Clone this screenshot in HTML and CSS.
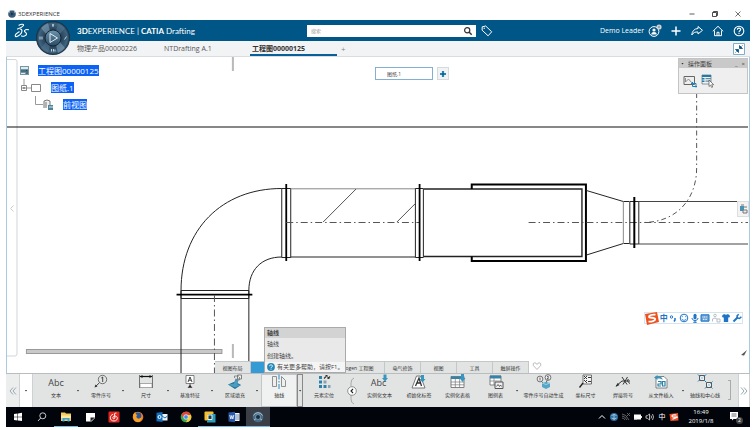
FILE: index.html
```html
<!DOCTYPE html>
<html lang="zh-CN">
<head>
  <meta charset="UTF-8">
  <title>3DEXPERIENCE</title>
  <link rel="stylesheet" href="styles.css">
</head>
<body>
  <div class="screen">
    <div class="titlebar">
      <svg class="app-icon" viewBox="0 0 8 8"><circle cx="4" cy="4" r="3.8" fill="#375a78"/><path d="M1 3a3 3 0 0 1 6 0" fill="none" stroke="#9fb9cc"/><path d="M3 2.500l3 1.500-3 1.500z" fill="#16324a"/></svg>
      <span class="title">3DEXPERIENCE</span>
      <div class="win-buttons">
        <button aria-label="最小化"><svg viewBox="0 0 8 8"><path d="M1.500 4h5" stroke="#333" stroke-width=".8"/></svg></button>
        <button aria-label="还原"><svg viewBox="0 0 8 8"><path d="M1.500 2.500h4v4h-4zM2.500 2.500v-1h4v4h-1" fill="none" stroke="#222" stroke-width=".8"/></svg></button>
        <button aria-label="关闭"><svg viewBox="0 0 8 8"><path d="M1.500 1.500l5 5M6.500 1.500l-5 5" stroke="#333" stroke-width=".7"/></svg></button>
      </div>
    </div>

    <header class="topbar">
      <svg class="ds-logo" viewBox="0 0 16 16" fill="none" stroke="#fff" stroke-width="1.100" stroke-linecap="round"><path d="M5 2.200C7.500.6 10.500 1 9.300 2.700 8.300 4.200 5.500 5.300 3.500 6"/><path d="M6.300 6c2.700.5 1.700 3.800-.3 5.700C4 13.500 1.500 14.300 1.200 13c0-1.300 2.200-3.200 4-4.200"/><path d="M14.500 6.800c-1.800-.8-4.500 0-4 1.500.4 1.100 2.300 1.300 2 2.800-.4 1.900-3.300 2.600-5 1.800"/></svg>
      <div class="brand"><b>3D</b>EXPERIENCE | <b>CATIA</b> Drafting</div>
      <form class="search">
        <input type="text" placeholder="搜索" aria-label="搜索">
        <button type="button" aria-label="搜索"><svg viewBox="0 0 10 10"><circle cx="4.200" cy="4.200" r="2.600" fill="none" stroke="#333" stroke-width="1.200"/><path d="M6 6l2.700 2.700" stroke="#333" stroke-width="1.500"/></svg></button>
      </form>
      <button class="tag" aria-label="标记"><svg viewBox="0 0 12 12"><path d="M1.200 1.800l3.500-.8 6 5.800-3.600 4-6-5.600z" fill="none" stroke="#fff"/><circle cx="3.200" cy="3.200" r=".7" fill="#fff"/></svg></button>
      <div class="account">
        <span class="user">Demo Leader</span>
        <button aria-label="用户"><svg viewBox="0 0 14 14"><circle cx="6" cy="7.500" r="4.900" fill="none" stroke="#fff"/><circle cx="6" cy="6" r="1.600" fill="#fff"/><path d="M3.200 10.500c0-3.300 5.600-3.300 5.600 0z" fill="#fff"/><circle cx="11" cy="3" r="2.600" fill="#cdd3d8"/><circle cx="11" cy="3" r="1" fill="#8797a3"/></svg></button>
        <button aria-label="添加"><svg viewBox="0 0 14 14"><path d="M7 2.500v9M2.500 7h9" stroke="#fff" stroke-width="1.500"/></svg></button>
        <button aria-label="共享"><svg viewBox="0 0 14 14"><path d="M8 2.500l4.500 3.800L8 10V8C5 7.800 3.300 8.500 1.800 11 2 7.500 4 4.700 8 4.500z" fill="none" stroke="#fff" stroke-linejoin="round"/></svg></button>
        <button aria-label="主页"><svg viewBox="0 0 14 14"><path d="M1.800 7.300L7 2.300l5.200 5M3.500 6.500v5.200h7V6.500M6 11.500V8.300h2v3.200" fill="none" stroke="#fff"/></svg></button>
        <button aria-label="帮助"><svg viewBox="0 0 14 14"><circle cx="7" cy="7" r="4.800" fill="none" stroke="#fff" stroke-width="1.100"/><path d="M5.300 5.800c0-2.200 3.400-2.200 3.400-.2C8.700 6.800 7 6.800 7 8.200M7 9v1.100" fill="none" stroke="#fff" stroke-width="1.100"/></svg></button>
      </div>
      <button class="compass" aria-label="罗盘">
        <svg viewBox="0 0 36 36">
          <defs>
            <radialGradient id="ring"><stop offset=".5" stop-color="#29435a"/><stop offset=".85" stop-color="#3e6480"/><stop offset="1" stop-color="#16293a"/></radialGradient>
            <linearGradient id="core" x2="0" y2="1"><stop offset="0" stop-color="#6f94ae"/><stop offset="1" stop-color="#294b66"/></linearGradient>
          </defs>
          <circle cx="18" cy="18" r="17" fill="url(#ring)"/>
          <path d="M6 8a16 16 0 0 1 7-5l2 8-4 3zM30 28a16 16 0 0 1-7 5l-2-8 4-3z" fill="#88a8bd" opacity=".55"/>
          <path d="M30 8a16 16 0 0 0-7-5l-2 8 4 3zM6 28a16 16 0 0 0 7 5l2-8-4-3z" fill="#557a94" opacity=".5"/>
          <circle cx="18" cy="18" r="8" fill="url(#core)" stroke="#132737"/>
          <path d="M15 13.500l7.500 4.500-7.500 4.500z" fill="none" stroke="#e3edf3"/>
          <path d="M18 4v3M17 5h2M5 16.500v3M7 16.500v3M29.500 19.500l2-3M16.500 29v2.500M18.500 29v2.500M20 29.500v2" stroke="#d6e2ea" stroke-width=".9"/>
        </svg>
      </button>
    </header>

    <nav class="doc-tabs">
      <a class="doc-tab" href="#">物理产品00000226</a>
      <a class="doc-tab" href="#">NTDrafting A.1</a>
      <a class="doc-tab active" href="#">工程图00000125</a>
      <button class="add-tab" aria-label="新建选项卡">+</button>
      <button class="shrink" aria-label="缩小"><svg viewBox="0 0 12 12"><path d="M.5.5h11v11H.5z" fill="#fff" stroke="#7fb0ca"/><path d="M2.500 9.500l1-1M2.500 6.500h3v3zM9.500 2.500l-1 1M6.500 2.500v3h3z" fill="#0b517d" stroke="#0b517d" stroke-width=".8"/></svg></button>
    </nav>

    <main class="canvas">
      <svg class="drawing" viewBox="6 57 744 316" preserveAspectRatio="none" fill="none" stroke="#222" stroke-width="1">
        <!-- side rail and scroll bars -->
        <path d="M6 59.500h8q2 0 2 2V354q0 2-2 2H6" stroke="#cfd6da"/>
        <path d="M12.500 205.500l-3 3 3 3" stroke="#c5cdd2"/>
        <rect x="25.500" y="349.500" width="196" height="4" fill="#c9c9c9" stroke="#999"/>
        <path d="M232.500 57v14M232.500 344v14" stroke="#b9b9b9" stroke-width="2"/>
        <path d="M6 127h743" stroke="#111" stroke-width="1.200"/>
        <!-- elbow -->
        <path d="M180.500 373v-82.500C180.500 230 221 188.500 281.500 188.500M248.500 373v-82.500C248.500 270 261 257 281.500 257"/>
        <path d="M180.500 290.500h68v8h-68z"/>
        <path d="M176 294.700h76" stroke="#000" stroke-width="1.800"/>
        <path d="M214 295v78" stroke="#555" stroke-dasharray="7 3 1.500 3"/>
        <path d="M281.500 188.500h9v69h-9z"/>
        <path d="M286 184v77" stroke="#000" stroke-width="1.800"/>
        <!-- straight pipe -->
        <path d="M290.500 188.800h125" stroke="#888"/>
        <path d="M290.500 257h125"/>
        <path d="M323 222l33-33M397 222l18-18" stroke="#555"/>
        <path d="M286 222.500h134" stroke="#555" stroke-dasharray="7 3 1.500 3"/>
        <path d="M415.500 188.500h8v69h-8z"/>
        <path d="M419.700 184v77" stroke="#000" stroke-width="1.800"/>
        <!-- sleeve -->
        <path d="M424 189h158.500v67.500H424" stroke-width="1.400"/>
        <path d="M472 189v-4.500h114.500v76.500H472v-4.500" stroke="#000" stroke-width="2"/>
        <path d="M529 222.500h220" stroke="#555" stroke-dasharray="7 3 1.500 3"/>
        <!-- reducer and branch -->
        <path d="M587 190.500l37 11h6M587 255l37-11.500h6M630.500 201.500h9v42.500h-9z"/>
        <path d="M624 201.500v42.500" stroke="#888"/>
        <path d="M635 197v51" stroke="#000" stroke-width="2"/>
        <path d="M639.500 201.500h109.500M639.500 244h109.500" stroke="#444"/>
        <path d="M697.500 93v75c0 31-20 54.500-54 54.500" stroke="#555" stroke-dasharray="5 3 1.500 3"/>
        <path d="M748 350l-6 5 3 0.500-1.500 3z" fill="#555" stroke="none"/>
      </svg>

      <ul class="tree">
        <li>
          <svg viewBox="0 0 9 9"><path d="M0 0h9v9H0z" fill="#7895a4"/><path d="M1 1h7v2H1zM1 7h4v1H1z" fill="#dcebf1"/><path d="M1 5h5l1-1v4" stroke="#19485f" fill="none"/></svg>
          <span>工程图00000125</span>
        </li>
        <li class="sheet">
          <svg viewBox="0 0 22 17"><path d="M4 0v6M6 9h5" stroke="#999"/><path d="M1.500 6.500h5v5h-5zM11.500 5.500h9v7h-9z" fill="#fff" stroke="#888"/><path d="M2.500 9h3" stroke="#222"/></svg>
          <span>图纸.1</span>
        </li>
        <li class="view">
          <svg viewBox="0 0 20 17"><path d="M1.500 0v8.500H9" fill="none" stroke="#999"/><path d="M10 12V5l3-1 3 1v4" fill="#eee" stroke="#777"/><path d="M12 6v6" stroke="#777"/><path d="M14 9h5v5h-5z" fill="#4e8296"/><path d="M15 11h4" stroke="#d7e8ee"/></svg>
          <span>前视图</span>
        </li>
      </ul>

      <div class="sheet-picker">
        <input type="text" value="图纸.1" aria-label="图纸">
        <button aria-label="新建图纸"><svg viewBox="0 0 10 10"><path d="M5 2v6M2 5h6" stroke="#1f84b4" stroke-width="2.200"/><path d="M5 4v2M4 5h2" stroke="#0c5680"/></svg></button>
      </div>

      <section class="panel">
        <div class="panel-title">
          <span class="caret"></span>
          <span class="panel-name">操作面板</span>
          <button aria-label="最小化">_</button>
          <button aria-label="关闭">×</button>
        </div>
        <div class="panel-body">
          <button aria-label="视图裁剪"><svg viewBox="0 0 14 14"><path d="M1 2.500h10.500v8H1z" fill="#eee" stroke="#666"/><path d="M2.500 4v4l3-3 3 3.500H10" fill="none" stroke="#777" stroke-width=".8"/><path d="M8 9.500h5v4M9.500 8v4.500H14" fill="none" stroke="#1a82b5"/></svg></button>
          <button aria-label="选择列表"><svg viewBox="0 0 14 14"><path d="M1 1h9v9H1z" fill="#eef3f5" stroke="#56707f" stroke-width=".7"/><path d="M1 1h9v2H1zM1 4h2.500v1.500H1zM1 6.500h2.500V8H1z" fill="#207ba9"/><path d="M4.500 4.700H10M4.500 7.200H10" stroke="#6c8b9a" stroke-width="1.300"/><path d="M8 6v6.500l1.500-1.400 1.200 2.400 1-.5-1-2.300h2z" fill="#fff" stroke="#555" stroke-width=".7"/></svg></button>
        </div>
      </section>

      <button class="side-tool" aria-label="树"><svg viewBox="0 0 10 14"><path d="M2 4h4v5H2z" fill="#4a92b5"/><path d="M3 3h3M6 5h3M5 8h4v3H5z" fill="#eee" stroke="#777"/></svg></button>

      <div class="ime">
        <svg class="sogou" viewBox="0 0 14 13"><path d="M0 2L12 0l2 10-12 3z" fill="#f0501e"/><path d="M10.500 2.700C7 2.500 3.800 3 4 4.800c.2 1.500 6 .3 6.200 2.200.2 2-3.500 2.600-6.700 2.600" fill="none" stroke="#fff" stroke-width="1.800"/></svg>
        <button class="zh">中</button>
        <button aria-label="标点"><svg viewBox="0 0 10 10"><circle cx="3.500" cy="4" r="1.200" fill="none" stroke="#1f74c8"/><path d="M7 5v2l-1 1.500" fill="none" stroke="#1f74c8" stroke-width="1.500"/></svg></button>
        <button aria-label="表情"><svg viewBox="0 0 10 10"><circle cx="5" cy="5" r="3.800" fill="none" stroke="#1f74c8"/><path d="M3.300 3.200v1M6.700 3.200v1M2.800 5.800c1 2 3.400 2 4.400 0" fill="none" stroke="#1f74c8" stroke-width=".9"/></svg></button>
        <button aria-label="语音"><svg viewBox="0 0 10 10"><rect x="3.500" y=".8" width="3" height="5.500" rx="1.500" fill="#1f74c8"/><path d="M2 5c0 3.300 6 3.300 6 0M5 7v2.500M3.300 9.300h3.400" fill="none" stroke="#1f74c8"/></svg></button>
        <button aria-label="键盘"><svg viewBox="0 0 10 10"><path d="M1 1.800h8v6.400H1z" fill="#6ba3d9" stroke="#1f74c8"/><path d="M2.500 4h5M3 6.300h4" stroke="#fff" stroke-dasharray="1 .6"/></svg></button>
        <button aria-label="登录"><svg viewBox="0 0 10 10" fill="none" stroke="#b8bec5"><circle cx="4" cy="2.500" r="1.300"/><path d="M1.500 8.500V6L4 5l2 1v3M6 6h3v3H6"/></svg></button>
        <button aria-label="皮肤"><svg viewBox="0 0 10 10"><path d="M3 1L.8 3 2 4.800l.8-.5V9h4.400V4.300l.8.500L9.200 3 7 1Q5 2.500 3 1z" fill="#1f74c8"/></svg></button>
        <button aria-label="工具箱"><svg viewBox="0 0 10 10"><path d="M1.500 8.500l4-4" stroke="#1f74c8" stroke-width="2"/><path d="M6.700 1.200L5 3l.5 2 2 .5 1.900-1.800" fill="none" stroke="#1f74c8" stroke-width="1.500"/></svg></button>
      </div>

      <nav class="ribbon-tabs">
        <button>视图布局</button>
        <button class="active" aria-label="标注"></button>
        <button class="wide">ogen 工程图</button>
        <button>电气修饰</button>
        <button>视图</button>
        <button>工具</button>
        <button>触屏操作</button>
        <svg class="heart" viewBox="0 0 10 10"><path d="M5 8.500L1.300 4.500Q.5 2 2.700 1.800 4.300 1.800 5 3.500 5.700 1.800 7.300 1.800 9.500 2 8.700 4.500z" fill="none" stroke="#aaa" stroke-width=".8"/></svg>
      </nav>

      <div class="tooltip" role="tooltip">
        <strong>轴线</strong>
        <p>轴线</p>
        <p>创建轴线。</p>
        <div class="tip-help"><svg viewBox="0 0 8 8"><circle cx="4" cy="4" r="3.900" fill="#2488b9"/><path d="M2.500 3.200c0-1.700 3-1.700 3-.1C5.500 4 4 4 4 5.200M4 5.800v.9" fill="none" stroke="#fff" stroke-width=".9"/></svg>有关更多帮助，请按F1。</div>
      </div>
    </main>

    <div class="ribbon">
      <button class="end" aria-label="收起"><svg viewBox="0 0 8 10"><path d="M4 1.500L1 5l3 3.500M7 1.500L4 5l3 3.500" fill="none" stroke="#9aa9b1"/></svg></button>
      <button class="more" aria-label="更多"><span class="caret"></span></button>
      <div class="tool split">
        <button><span class="abc">Abc</span>文本</button>
        <button class="drop" aria-label="文本选项"><span class="caret"></span></button>
      </div>
      <div class="tool split">
        <button><svg viewBox="0 0 16 16"><circle cx="9.500" cy="5.500" r="4.200" fill="none" stroke="#555" stroke-width=".8"/><path d="M8.300 4l1.400-1v5M6.500 8.700L2.500 12.500" fill="none" stroke="#333" stroke-width=".9"/><path d="M1.500 13.500l1-3 2 2z" fill="#333"/></svg>零件序号</button>
        <button class="drop" aria-label="零件序号选项"><span class="caret"></span></button>
      </div>
      <div class="tool split">
        <button><svg viewBox="0 0 16 16"><path d="M1.500 1v13M14.500 1v13" stroke="#555" stroke-width=".8"/><path d="M2 2.500h12" stroke="#111" stroke-width="1.200"/><path d="M2 2.500L4.500 1v3zM14 2.500L11.500 1v3z" fill="#111"/><path d="M2 9.500h12v4H2z" fill="#fff" stroke="#777" stroke-width=".6"/></svg>尺寸</button>
        <button class="drop" aria-label="尺寸选项"><span class="caret"></span></button>
      </div>
      <div class="tool split">
        <button><svg viewBox="0 0 16 16"><path d="M4 1.500h8v8H4z" fill="#fff" stroke="#555" stroke-width=".7"/><path d="M6 8l2-5 2 5M6.800 6.200h2.400M8 9.500V12" fill="none" stroke="#333" stroke-width=".9"/><path d="M5.500 13.800h5L8 11z" fill="#222"/></svg>基准特征</button>
        <button class="drop" aria-label="基准特征选项"><span class="caret"></span></button>
      </div>
      <div class="tool split">
        <button><svg viewBox="0 0 16 16"><path d="M1 10.500l7 4.500 6-4-6-3.500z" fill="#1e6f98"/><path d="M1 10.500l6-1 1.500-5 3 1-1 5 3.500.5-6 2.500z" fill="#4b9dc0"/><path d="M10.500 1h4v4h-4z" fill="#eee" stroke="#666" stroke-width=".8"/><path d="M7.500 4V2h4.500M8 6h4.500V3" fill="none" stroke="#777" stroke-width=".8"/></svg>区域填充</button>
        <button class="drop" aria-label="区域填充选项"><span class="caret"></span></button>
      </div>
      <div class="tool split selected">
        <button><svg viewBox="0 0 16 16"><path d="M1.500 2.500h4v10h-4zM10.500 2.500l4 4v6h-4z" fill="#eef0f0" stroke="#777" stroke-width=".8"/><path d="M8 .5v15" stroke="#258bbd" stroke-dasharray="5 1.500 1.500 1.500"/></svg>轴线</button>
        <button class="drop" aria-label="轴线选项"><span class="caret"></span></button>
      </div>
      <div class="tool">
        <button><svg viewBox="0 0 16 16"><path d="M3 2h3v3H3zM3 6.500h3v3H3zM3 11h3v3H3zM7.500 11h3v3h-3z" fill="#2a82ac"/><path d="M7.500 6.500h3v3h-3zM12 11h2.500v3H12z" fill="#8aa2ae"/><path d="M8 4.500l2-2M9.500 1.500h1.500V3M14 2.500l-2 2M12 3v1.500h1.500" fill="none" stroke="#333" stroke-width="1.100"/></svg>元素定位</button>
      </div>
      <button class="divider" aria-label="折叠组"><svg viewBox="0 0 12 28"><path d="M8 1q-3 1-3 5v3M5 18v4q0 4 3 5" fill="none" stroke="#999" stroke-width=".8"/><circle cx="6" cy="14" r="4.300" fill="#fff" stroke="#777" stroke-width=".8"/><path d="M7 12l-2 2 2 2" fill="none" stroke="#222" stroke-width="1.100"/></svg></button>
      <div class="tool">
        <button><span class="abc">Abc<svg class="arrow" viewBox="0 0 6 7"><path d="M1.500 0h3v3.500H6L3 7 0 3.500h1.500z" fill="#3995bd"/></svg></span>实例化文本</button>
      </div>
      <div class="tool">
        <button><svg viewBox="0 0 16 16"><path d="M1 14L5.500 2h4L14 14z" fill="#fff" stroke="#777"/><path d="M4.500 12L8 4l2.500 8M6 9h4" fill="none" stroke="#333" stroke-width="1.300"/><path d="M10 1h3v4h1.500l-3 3.500-3-3.500H10z" fill="#3995bd"/></svg>初始化标签</button>
      </div>
      <div class="tool">
        <button><svg viewBox="0 0 16 16"><path d="M1 2.500h13v11H1z" fill="#fff" stroke="#666" stroke-width=".8"/><path d="M1 2.500h13v2.500H1z" fill="#3584a8"/><path d="M1 8h13M1 10.800h13M5.300 5v8.500M9.600 5v8.500" stroke="#777" stroke-width=".7"/><path d="M11 0h3v4h1.500L12.500 8l-3-4H11z" fill="#3995bd"/></svg>实例化表格</button>
      </div>
      <div class="tool split">
        <button><svg viewBox="0 0 16 16"><path d="M2 2h11v9H2z" fill="#fff" stroke="#666" stroke-width=".8"/><path d="M2 1.500h11v3H2z" fill="#3584a8"/><path d="M2 7h11M6 4v7" stroke="#777" stroke-width=".7"/><path d="M7 8h8v6.500H7z" fill="#eee" stroke="#555"/><path d="M8.500 12.500l1.500-2 1.500 2 1-1.500 1 1.500" fill="none" stroke="#444" stroke-width=".8"/></svg>图例表</button>
        <button class="drop" aria-label="图例表选项"><span class="caret"></span></button>
      </div>
      <div class="tool">
        <button><svg viewBox="0 0 16 16"><circle cx="4" cy="5" r="2.900" fill="#eee" stroke="#555" stroke-width=".8"/><circle cx="12" cy="3.500" r="2.900" fill="#eee" stroke="#555" stroke-width=".8"/><path d="M4 3.500v3M11 2.600q1.500-1 1.500.5L11 5h2M5.500 7.500L7 9M11 6.500L10 9" fill="none" stroke="#444" stroke-width=".8"/><path d="M6 9l4-1 4 1v4l-4 2-4-2z" fill="#55a5c9"/><path d="M6 9l4 1.500L14 9" fill="none" stroke="#9bd0e5"/></svg>零件序号自动生成</button>
      </div>
      <div class="tool">
        <button><svg viewBox="0 0 16 16"><path d="M5 1h8.500v9H5z" fill="#f4f4f4" stroke="#555" stroke-width=".8"/><path d="M6 2l3 3M9 2L6 5M10 3.500h3M6 6l3 3M9 6L7.500 7.500M10 7.500h3" stroke="#222" stroke-width=".9"/><path d="M5 9l-3.500 4.500" stroke="#222" stroke-width="1.300"/></svg>坐标尺寸</button>
      </div>
      <div class="tool">
        <button><svg viewBox="0 0 16 16"><path d="M1 12L7 7h8M7 3l5 7.500M12.500 3L8 10.500M13.500 5Q11 7 15 9.500" fill="none" stroke="#333"/><path d="M.5 13l2-4 2 2z" fill="#333"/></svg>焊接符号</button>
      </div>
      <div class="tool split">
        <button><svg viewBox="0 0 16 16"><path d="M3 2.500h8l3 3V14H3z" fill="#fff" stroke="#666" stroke-width=".8"/><path d="M1 3.500L4.500 1v1.500c4 0 5 1.500 5 3.500-1-1.300-2.500-1.500-5-1.500V6z" fill="#3995bd"/><path d="M5 7.500h3V10H5v2h3M9.500 7.500h2.500v4.500H9.500z" fill="none" stroke="#2b82a9" stroke-width="1.200"/></svg>从文件插入</button>
        <button class="drop" aria-label="从文件插入选项"><span class="caret"></span></button>
      </div>
      <div class="tool">
        <button><svg viewBox="0 0 16 16"><path d="M2.500 1.500h5v5h-5zM9.500 8.500h5v5h-5z" fill="#edf3f5" stroke="#333" stroke-width=".8"/><path d="M1 .5l2 2M9 .5l-2 2M1 7.500l2-2M9 8L7 6M15.500 7.500l-2 2M15.500 14.500l-2-2M8 14.500l2-2" stroke="#2383b2"/><path d="M4.500 4h1M11.500 11h1" stroke="#2383b2"/></svg>轴线和中心线</button>
      </div>
      <div class="bracket"></div>
      <button class="end right" aria-label="展开"><svg viewBox="0 0 8 10"><path d="M1 1.500L4 5 1 8.500M4 1.500L7 5 4 8.500" fill="none" stroke="#9aa9b1"/></svg></button>
    </div>

    <footer class="taskbar">
      <button aria-label="开始"><svg viewBox="0 0 12 12"><path d="M2 3l3.500-.5v3.200H2zM6 2.400l4-.6v3.900H6zM2 6.200h3.500v3.300L2 9zM6 6.200h4V10l-4-.5z" fill="#fff"/></svg></button>
      <button aria-label="搜索"><svg viewBox="0 0 12 12"><circle cx="6.800" cy="4.800" r="3" fill="none" stroke="#ddd" stroke-width=".9"/><path d="M4.700 7L2 10" stroke="#ddd" stroke-width=".9"/></svg></button>
      <button class="open" aria-label="文件资源管理器"><svg viewBox="0 0 12 12"><path d="M1 1.500h4l1 1h5V10H1z" fill="#f6cc5c"/><path d="M1 4.500h10V7H1z" fill="#ffe8a0"/><path d="M2.500 10.500V7h7v3.500h-2v-2h-3v2z" fill="#36a3df"/></svg></button>
      <button aria-label="便笺"><svg viewBox="0 0 12 12"><path d="M2 2h9v5l-3.500 3.500H2z" fill="#fff"/><path d="M6.500 10.500v-4H11" fill="#222"/></svg></button>
      <button aria-label="网易云音乐"><svg viewBox="0 0 12 12"><rect x=".5" y=".5" width="11" height="11" rx="1" fill="#df261f"/><path d="M8.500 2Q6 1.500 6.500 4L7 7Q5 9 4.800 6.800 5.200 5 7 5c3.500.3 3 5-1 5-5 0-4.500-6-.8-6.700" fill="none" stroke="#fff" stroke-width=".9"/></svg></button>
      <button aria-label="Firefox"><svg viewBox="0 0 12 12"><circle cx="6" cy="6" r="5.300" fill="#ef7b1c"/><circle cx="6" cy="4.800" r="3.300" fill="#24579f"/><path d="M1 4q1-3 3-3Q2.500 3 5.500 4 3.500 5 5 7q2 2 5-1-1 5-4 5-5 0-5-7z" fill="#f6a229"/></svg></button>
      <button aria-label="Outlook"><svg viewBox="0 0 12 12"><path d="M5 3h6.500v6.500H5z" fill="#eaf3fb"/><path d="M6 5l3 2 2.500-2" fill="none" stroke="#1573be"/><path d="M.5 1.800L6.500 1v10l-6-.8z" fill="#1170bf"/><circle cx="3.500" cy="6" r="1.500" fill="none" stroke="#fff"/></svg></button>
      <button aria-label="Chrome"><svg viewBox="0 0 12 12"><circle cx="6" cy="6" r="5.300" fill="#37a450"/><path d="M1.400 3.300A5.300 5.300 0 0 1 11 4H6L3.500 7z" fill="#df4637"/><path d="M11 4A5.300 5.300 0 0 1 6 11.300L8.300 6.500 7 4z" fill="#f7cc3b"/><circle cx="6" cy="6" r="2.300" fill="#4388e8" stroke="#fff" stroke-width=".7"/></svg></button>
      <button class="open" aria-label="VMware"><svg viewBox="0 0 12 12"><rect x=".5" y=".5" width="9" height="9" rx="1" fill="#f4bf33"/><path d="M4 3h7.500v8.500H3V9.500h1z" fill="#2d9cb8"/><path d="M4 4h4v4.500H4z" fill="#163b4c" stroke="#f2f2d8"/></svg></button>
      <button class="open" aria-label="Word"><svg viewBox="0 0 12 12"><path d="M5 2h6.500v8H5z" fill="#f5f7fb"/><path d="M7 4h4M7 6h4M7 8h4" stroke="#315ca7" stroke-width=".7"/><path d="M.5 1.500L7 .7v10.600L.5 10.500z" fill="#295aa8"/><path d="M1.800 4l1 4 1-3.500 1 3.500 1-4" fill="none" stroke="#fff" stroke-width=".8"/></svg></button>
      <button class="open current" aria-label="3DEXPERIENCE"><svg viewBox="0 0 12 12"><circle cx="6" cy="6" r="5.300" fill="#476b85"/><path d="M1.500 4.500a5 5 0 0 1 9 0M2 9l3-2M10 9L7 7" fill="none" stroke="#a9c5d6"/><circle cx="6" cy="6" r="2.500" fill="#152f44" stroke="#91b0c4" stroke-width=".7"/></svg></button>
      <div class="tray">
        <button aria-label="显示隐藏的图标"><svg viewBox="0 0 10 10"><path d="M2 6.500l3-3 3 3" fill="none" stroke="#fff"/></svg></button>
        <button aria-label="网络助手"><svg viewBox="0 0 10 10"><circle cx="5" cy="5" r="4" fill="#2d6da0"/><path d="M2.500 3.500q3-2 5 0M2.500 6q3 2 5 0M5 2v6" fill="none" stroke="#b9d7e8" stroke-width=".8"/></svg></button>
        <button aria-label="无线网络"><svg viewBox="0 0 10 10" fill="none" stroke="#777" stroke-width=".8"><path d="M1 2q4 0 7 6M1 4q3 0 5 4M1 6q2 0 3 2M6 1l3 3M9 1L6 4"/></svg></button>
        <button aria-label="电池"><svg viewBox="0 0 10 10"><path d="M1 2.500h7v5H1z" fill="#fff"/><path d="M8.500 4v2M1 7h3" stroke="#ddd"/></svg></button>
        <button aria-label="音量"><svg viewBox="0 0 10 10" fill="none" stroke="#ddd" stroke-width=".8"><path d="M1 3.800h1.500l2-2v6.400l-2-2H1zM6 3.500q1 1.500 0 3M7.500 2q2 3 0 6"/></svg></button>
        <button>中</button>
        <button aria-label="搜狗输入法"><svg viewBox="0 0 10 10"><path d="M.5 2L9 1l.5 7.500L1.500 9z" fill="#ef4b20"/><path d="M7.500 3Q3 2.500 3 4t4 1-3.500 2.300" fill="none" stroke="#fff" stroke-width="1.200"/></svg></button>
      </div>
      <time class="clock">16:49<br>2019/1/8</time>
      <button class="notice" aria-label="2 条通知"><svg viewBox="0 0 12 12"><path d="M1 1h8v7H4.500L3 9.500V8H1z" fill="#fff"/><path d="M2.500 3h5M2.500 5h5" stroke="#333" stroke-width=".7"/></svg><span>2</span></button>
    </footer>
  </div>
</body>
</html>
```

FILE: styles.css
```css
* {
  box-sizing: border-box;
}

body {
  margin: 0;
  padding: 8px 6px 3px;
  background: #fff;
  color: #444;
  font-family: "Open Sans", "Noto Sans CJK SC", sans-serif;
  font-size: 7px;
  line-height: 10px;
}

button,
input {
  margin: 0;
  padding: 0;
  border: 0;
  background: none;
  color: inherit;
  font: inherit;
}

button {
  display: flex;
  align-items: center;
  justify-content: center;
}

svg {
  display: block;
  flex: none;
}

.screen {
  display: flex;
  flex-direction: column;
  min-height: calc(100vh - 11px);
}

.caret {
  width: 3px;
  height: 2px;
  background: #333;
  clip-path: polygon(0 0, 100% 0, 50% 100%);
}

/* window title */
.titlebar {
  display: flex;
  align-items: center;
  height: 12px;
  padding: 0 8px 0 2px;
}

.app-icon {
  width: 8px;
  height: 8px;
}

.title {
  margin-left: 2px;
  color: #333;
  font-size: 6px;
}

.win-buttons {
  display: flex;
  gap: 15px;
  margin-left: auto;
}

.win-buttons svg {
  width: 8px;
  height: 8px;
}

/* blue bar */
.topbar {
  position: relative;
  display: flex;
  align-items: center;
  height: 21px;
  padding: 0 4px 0 8px;
  background: #005686;
  color: #fff;
}

.ds-logo {
  width: 16px;
  height: 16px;
}

.brand {
  width: 230px;
  margin-left: 47px;
  font-family: Lato, sans-serif;
  font-size: 8px;
  white-space: nowrap;
}

.search {
  display: flex;
  width: 169px;
  height: 12px;
  background: #fff;
}

.search input {
  flex: 1;
  min-width: 0;
  padding-left: 4px;
  color: #333;
  font-size: 5px;
}

.search input::placeholder {
  color: #999;
}

.search button {
  width: 16px;
}

.search svg {
  width: 10px;
  height: 10px;
}

.tag {
  margin-left: 5px;
}

.tag svg {
  width: 12px;
  height: 12px;
}

.account {
  display: flex;
  align-items: center;
  gap: 7px;
  margin-left: auto;
}

.user {
  margin-right: -3px;
}

.account svg {
  width: 14px;
  height: 14px;
}

.compass {
  position: absolute;
  top: 0;
  left: 29px;
  z-index: 2;
}

.compass svg {
  width: 36px;
  height: 36px;
}

/* document tabs */
.doc-tabs {
  display: flex;
  height: 16px;
  padding-left: 71px;
  border-bottom: 1px solid #dadde0;
  background: #f2f3f5;
}

.doc-tab {
  width: 87px;
  color: #555;
  line-height: 15px;
  text-decoration: none;
  white-space: nowrap;
}

.doc-tab.active {
  padding-left: 2px;
  margin-left: -1px;
  border-bottom: 2px solid #08609a;
  color: #333;
  font-weight: bold;
}

.add-tab {
  margin-left: 4px;
  color: #888;
  font-size: 8px;
}

.shrink {
  margin-left: auto;
  padding-right: 5px;
}

.shrink svg {
  width: 12px;
  height: 12px;
}

/* drawing area */
.canvas {
  position: relative;
  flex: 1;
  min-height: 300px;
  border: solid #a9cbe0;
  border-width: 0 1px;
}

.drawing {
  position: absolute;
  inset: 0;
  width: 100%;
  height: 100%;
}

.tree {
  position: relative;
  margin: 0;
  padding: 5px 0 0 13px;
  list-style: none;
  font-size: 8px;
}

.tree li {
  display: flex;
  align-items: center;
  gap: 9px;
  height: 17px;
}

.tree svg {
  width: 9px;
  height: 9px;
}

.tree .sheet svg {
  width: 22px;
  height: 17px;
}

.tree .view {
  padding-left: 14px;
}

.tree .view svg {
  width: 20px;
  height: 17px;
}

.tree span {
  background: #0b62f5;
  color: #fff;
  line-height: 11px;
}

.sheet-picker {
  position: absolute;
  top: 10px;
  left: 368px;
  display: flex;
  gap: 4px;
  height: 13px;
}

.sheet-picker input {
  width: 58px;
  padding-left: 11px;
  border: 1px solid #83afd2;
  background: #fff;
  font-size: 5px;
}

.sheet-picker button {
  width: 12px;
  border: 1px solid #d4dade;
  background: #f1f3f4;
}

.sheet-picker svg {
  width: 10px;
  height: 10px;
}

.panel {
  position: absolute;
  top: 1px;
  right: 1px;
  width: 70px;
  border: 1px solid #c4c4c4;
  background: #efefef;
}

.panel-title {
  display: flex;
  align-items: center;
  gap: 4px;
  height: 9px;
  padding: 0 2px;
  background: #c9c9c9;
  font-size: 6px;
}

.panel-name {
  margin-right: auto;
}

.panel-body {
  display: flex;
  gap: 4px;
  height: 25px;
  padding: 0 4px;
}

.panel-body svg {
  width: 14px;
  height: 14px;
}

.side-tool {
  position: absolute;
  top: 144px;
  right: 0;
  border: 1px solid #ddd;
  background: #f3f3f3;
}

.side-tool svg {
  width: 10px;
  height: 14px;
}

.ime {
  position: absolute;
  right: 6px;
  bottom: 49px;
  display: flex;
  align-items: center;
  justify-content: space-between;
  width: 99px;
  height: 12px;
  border: 1px solid #d5e4f1;
  background: #fff;
  color: #1f74c8;
}

.ime svg {
  width: 10px;
  height: 10px;
}

.ime .sogou {
  width: 14px;
  height: 13px;
}

.ime .zh {
  font-size: 8px;
  font-weight: bold;
}

.ribbon-tabs {
  position: absolute;
  bottom: 0;
  left: 208px;
  display: flex;
  height: 12px;
  color: #333;
  font-size: 5px;
}

.ribbon-tabs button {
  width: 36px;
  border: solid #c4c7c8;
  border-width: 1px 1px 0 0;
  background: #e2e4e4;
  white-space: nowrap;
}

.ribbon-tabs .active {
  width: 84px;
  background: #359bd5;
}

.ribbon-tabs .wide {
  width: 50px;
}

.heart {
  width: 10px;
  height: 10px;
  margin-left: 3px;
}

.tooltip {
  position: absolute;
  bottom: 0;
  left: 257px;
  width: 82px;
  border: 1px solid #aaa;
  background: #e9e9e9;
  color: #444;
  font-size: 6px;
}

.tooltip strong {
  display: block;
  padding-left: 2px;
  background: #d3d3d3;
}

.tooltip p {
  margin: 0;
  padding-left: 2px;
  line-height: 12px;
}

.tip-help {
  display: flex;
  align-items: center;
  gap: 2px;
  padding-left: 2px;
  background: #f5f5f5;
  white-space: nowrap;
}

.tip-help svg {
  width: 8px;
  height: 8px;
}

/* tool ribbon */
.ribbon {
  display: grid;
  grid-template-columns: 13fr 18fr 45fr 45fr 44fr 45fr 45fr 42fr 42fr 14fr 41fr 38fr 39fr 43fr 47fr 37fr 38fr 44fr 38fr 14fr 12fr;
  height: 34px;
  border-top: 1px solid #b9bdbf;
  background: #e2e4e4;
  color: #333;
  font-size: 5px;
  line-height: 8px;
}

.ribbon > * {
  min-width: 0;
}

.tool {
  display: flex;
  justify-content: center;
}

.tool button {
  flex-direction: column;
  justify-content: flex-start;
  width: 38px;
  white-space: nowrap;
}

.tool svg {
  width: 16px;
  height: 16px;
  margin-bottom: 1px;
}

.tool.split {
  justify-content: flex-start;
}

.tool .drop {
  justify-content: center;
  width: 6px;
}

.selected > button {
  background: #f0f2f2;
  box-shadow: inset 0 0 0 1px #c3c6c8;
}

.selected .drop {
  background: #e2e4e4;
  box-shadow: inset 0 0 0 1px #888;
}

.abc {
  display: flex;
  height: 17px;
  color: #444;
  font-size: 9px;
  line-height: 17px;
}

.tool .abc .arrow {
  width: 6px;
  height: 8px;
  margin-left: -4px;
}

.end {
  background: #eceeee;
}

.end svg {
  width: 8px;
  height: 10px;
}

.end.right,
.more {
  border: solid #cfd2d4;
  border-width: 0 1px;
  background: #fff;
}

.more {
  width: 14px;
}

.divider svg {
  width: 12px;
  height: 28px;
}

.bracket {
  width: 3px;
  height: 20px;
  margin: 6px 0 0 4px;
  border: 1px solid #aaa;
  border-left: 0;
}

/* windows taskbar */
.taskbar {
  display: flex;
  height: 20px;
  background: #02040c;
  color: #fff;
}

.taskbar > button {
  width: 24px;
  border-bottom: 1px solid transparent;
}

.taskbar > button svg {
  width: 12px;
  height: 12px;
}

.taskbar > .open {
  border-color: #79b7e4;
}

.taskbar .current {
  background: #3a3f47;
}

.tray {
  display: flex;
  gap: 2px;
  margin-left: auto;
}

.tray button {
  width: 10px;
}

.tray svg {
  width: 10px;
  height: 10px;
}

.clock {
  width: 44px;
  padding-top: 1px;
  font-size: 6px;
  line-height: 9px;
  text-align: center;
}

.taskbar .notice {
  position: relative;
  margin-right: 3px;
}

.notice span {
  position: absolute;
  right: 4px;
  bottom: 2px;
  width: 7px;
  height: 7px;
  border-radius: 50%;
  background: #444;
  font-size: 5px;
  line-height: 7px;
}
```
